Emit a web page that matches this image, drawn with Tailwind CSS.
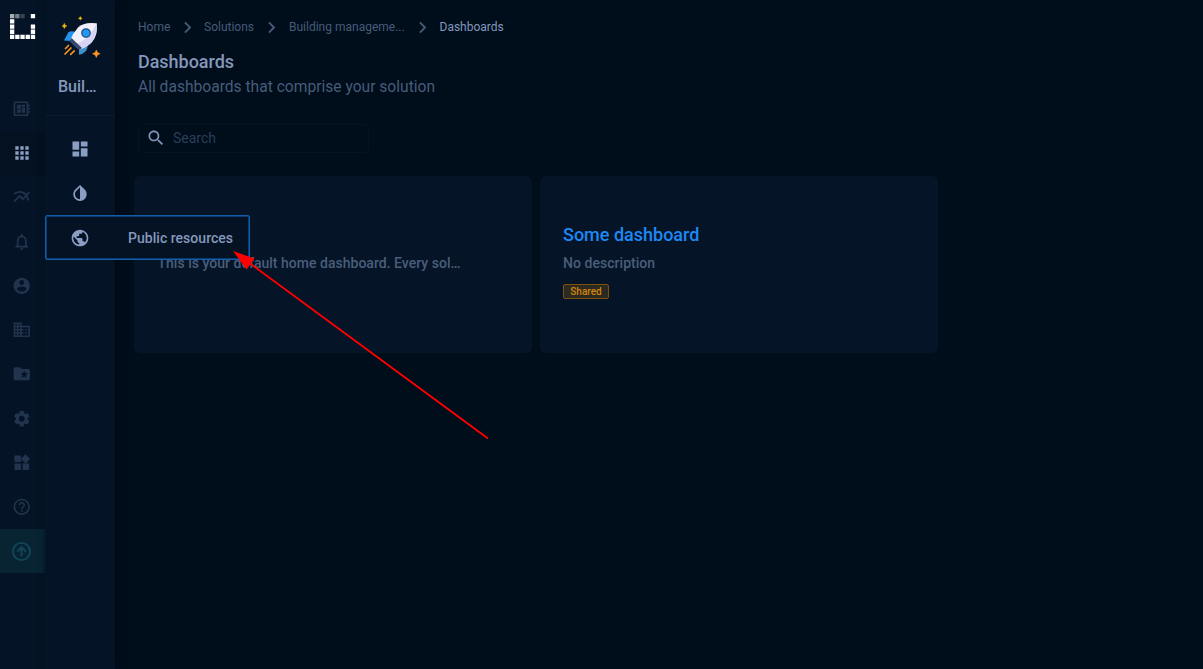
<!DOCTYPE html>
<html lang="en">
<head>
<meta charset="utf-8">
<title>Dashboards</title>
<script src="https://cdn.jsdelivr.net/npm/@tailwindcss/browser@4"></script>
</head>
<body class="relative flex h-[669px] w-[1203px] overflow-hidden bg-[#000d1b] font-['Roboto',sans-serif] text-[#8498bb]">

<!-- Main rail -->
<nav class="flex w-[45px] shrink-0 flex-col bg-[#041426] text-[#22344d]">
  <div class="h-[86.5px] pt-[14px] pl-[9.7px]">
    <svg width="26" height="26" viewBox="0 0 26 26" fill="#fff">
      <path d="M0 0h4.3v4.3H0z" opacity=".65"/><path d="M5.2 0h4.3v4.3H5.2z" opacity=".45"/><path d="M10.4 0h4.3v4.3h-4.3z" opacity=".2"/>
      <path d="M20.8 0h4.3v4.3h-4.3zM0 5.2h4.3v4.3H0zM0 10.4h4.3v4.3H0zM20.8 10.4h4.3v4.3h-4.3zM0 15.6h4.3v4.3H0zM20.8 15.6h4.3v4.3h-4.3zM0 20.8h4.3v4.3H0zM5.2 20.8h4.3v4.3H5.2zM10.4 20.8h4.3v4.3h-4.3zM15.6 20.8h4.3v4.3h-4.3zM20.8 20.8h4.3v4.3h-4.3z"/>
    </svg>
  </div>
  <div class="flex h-[44.25px] items-center pl-[12.2px]"><svg width="19.5" height="19.5" viewBox="0 0 24 24" fill="currentColor"><path d="M22 9V7h-2V5c0-1.100-.9-2-2-2H4c-1.100 0-2 .9-2 2v14c0 1.100.9 2 2 2h14c1.100 0 2-.9 2-2v-2h2v-2h-2v-2h2v-2h-2V9h2zm-4 10H4V5h14v14zM6 13h5v4H6zm6-6h4v3h-4zM6 7h5v5H6zm6 4h4v6h-4z"/></svg></div>
  <div class="flex h-[44.25px] items-center bg-[#041121] pl-[12.2px] text-[#8a9ec4]"><svg width="20" height="20" viewBox="0 0 24 24" fill="currentColor"><path d="M4 8h4V4H4v4zm6 12h4v-4h-4v4zm-6 0h4v-4H4v4zm0-6h4v-4H4v4zm6 0h4v-4h-4v4zm6-10v4h4V4h-4zm-6 4h4V4h-4v4zm6 6h4v-4h-4v4zm0 6h4v-4h-4v4z"/></svg></div>
  <div class="flex h-[44.25px] items-center pl-[12.2px]"><svg width="19.5" height="19.5" viewBox="0 0 24 24" fill="currentColor"><path d="M22 6.920l-1.410-1.410-2.850 3.210C15.680 6.400 12.830 5 9.610 5 6.720 5 4.070 6.160 2 8l1.420 1.420C5.120 7.930 7.270 7 9.610 7c2.740 0 5.090 1.260 6.770 3.240l-2.880 3.240-4-4L2 16.990l1.500 1.500 6-6.010 4 4 4.050-4.550c.75 1.350 1.250 2.900 1.440 4.550H21c-.22-2.300-.95-4.390-2.040-6.140L22 6.920z"/></svg></div>
  <div class="flex h-[44.25px] items-center pl-[12.2px]"><svg width="19.5" height="19.5" viewBox="0 0 24 24" fill="currentColor"><path d="M12 22c1.100 0 2-.9 2-2h-4c0 1.100.9 2 2 2zm6-6v-5c0-3.070-1.630-5.640-4.500-6.320V4c0-.83-.67-1.500-1.500-1.500s-1.500.67-1.500 1.500v.68C7.640 5.360 6 7.920 6 11v5l-2 2v1h16v-1l-2-2zm-2 1H8v-6c0-2.480 1.510-4.500 4-4.500s4 2.020 4 4.500v6z"/></svg></div>
  <div class="flex h-[44.25px] items-center pl-[12.2px]"><svg width="19.5" height="19.5" viewBox="0 0 24 24" fill="currentColor"><path d="M12 2C6.480 2 2 6.480 2 12s4.480 10 10 10 10-4.480 10-10S17.520 2 12 2zm0 3c1.660 0 3 1.340 3 3s-1.340 3-3 3-3-1.340-3-3 1.340-3 3-3zm0 14.200c-2.500 0-4.710-1.280-6-3.220.03-1.990 4-3.080 6-3.080 1.990 0 5.970 1.090 6 3.080-1.290 1.940-3.500 3.220-6 3.220z"/></svg></div>
  <div class="flex h-[44.25px] items-center pl-[12.2px]"><svg width="19.5" height="19.5" viewBox="0 0 24 24" fill="currentColor"><path d="M12 7V3H2v18h20V7H12zM6 19H4v-2h2v2zm0-4H4v-2h2v2zm0-4H4V9h2v2zm0-4H4V5h2v2zm4 12H8v-2h2v2zm0-4H8v-2h2v2zm0-4H8V9h2v2zm0-4H8V5h2v2zm10 12h-8v-2h2v-2h-2v-2h2v-2h-2V9h8v10zm-2-8h-2v2h2v-2zm0 4h-2v2h2v-2z"/></svg></div>
  <div class="flex h-[44.25px] items-center pl-[12.2px]"><svg width="19.5" height="19.5" viewBox="0 0 24 24" fill="currentColor"><path d="M20 6h-8l-2-2H4c-1.100 0-1.990.9-1.990 2L2 18c0 1.100.9 2 2 2h16c1.100 0 2-.9 2-2V8c0-1.100-.9-2-2-2zm-2.060 11L15 15.280 12.060 17l.78-3.330-2.590-2.240 3.410-.29L15 8l1.340 3.140 3.410.29-2.590 2.240.78 3.330z"/></svg></div>
  <div class="flex h-[44.25px] items-center pl-[12.2px]"><svg width="19.5" height="19.5" viewBox="0 0 24 24" fill="currentColor"><path d="M19.140 12.940c.04-.3.06-.61.06-.94 0-.32-.02-.64-.07-.94l2.030-1.580c.18-.14.23-.41.12-.61l-1.920-3.320c-.12-.22-.37-.29-.59-.22l-2.390.96c-.5-.38-1.030-.7-1.620-.94l-.36-2.540c-.04-.24-.24-.41-.48-.41h-3.840c-.24 0-.43.17-.47.41l-.36 2.540c-.59.24-1.130.57-1.620.94l-2.390-.96c-.22-.08-.47 0-.59.22L2.740 8.870c-.12.21-.08.47.12.61l2.030 1.580c-.05.3-.09.63-.09.94s.02.64.07.94l-2.030 1.580c-.18.14-.23.41-.12.61l1.920 3.320c.12.22.37.29.59.22l2.390-.96c.5.38 1.030.7 1.620.94l.36 2.540c.05.24.24.41.48.41h3.840c.24 0 .44-.17.47-.41l.36-2.540c.59-.24 1.130-.56 1.620-.94l2.390.96c.22.08.47 0 .59-.22l1.920-3.320c.12-.22.07-.47-.12-.61l-2.010-1.580zM12 15.600c-1.980 0-3.600-1.620-3.600-3.600s1.620-3.600 3.600-3.600 3.600 1.620 3.600 3.600-1.620 3.600-3.600 3.600z"/></svg></div>
  <div class="flex h-[44.25px] items-center pl-[12.2px]"><svg width="19.5" height="19.5" viewBox="0 0 24 24" fill="currentColor"><path d="M13 13v8h8v-8h-8zM3 21h8v-8H3v8zM3 3v8h8V3H3zm13.660-1.310L11 7.340 16.660 13l5.660-5.660-5.660-5.650z"/></svg></div>
  <div class="flex h-[44.25px] items-center pl-[12.2px]"><svg width="19.5" height="19.5" viewBox="0 0 24 24" fill="currentColor"><path d="M11 18h2v-2h-2v2zm1-16C6.480 2 2 6.480 2 12s4.480 10 10 10 10-4.480 10-10S17.520 2 12 2zm0 18c-4.410 0-8-3.590-8-8s3.590-8 8-8 8 3.590 8 8-3.590 8-8 8zm0-14c-2.210 0-4 1.790-4 4h2c0-1.100.9-2 2-2s2 .9 2 2c0 2-3 1.750-3 5h2c0-2.250 3-2.500 3-5 0-2.210-1.790-4-4-4z"/></svg></div>
  <div class="flex h-[44.25px] items-center bg-[#082433] pl-[10px] text-[#124657]"><svg width="23" height="23" viewBox="0 0 24 24" fill="none" stroke="currentColor" stroke-width="2"><circle cx="12" cy="12" r="9"/><path d="M12 17V8M7.500 12 12 7.500l4.500 4.500"/></svg></div>
</nav>

<!-- Solution rail -->
<aside class="flex w-[70px] shrink-0 flex-col bg-[#041426] shadow-[3px_0_8px_#000a17]">
  <div class="flex h-[115.500px] flex-col border-b border-l border-b-[#0b1c2f] border-l-[#031121] pl-[12px]">
    <svg class="mt-[15px] ml-[4px] shrink-0" width="40" height="44" viewBox="0 0 40 44">
      <path d="M6.500 17Q10 15.500 13.500 17L9 26 2 25.500z" fill="#2491ec"/>
      <path d="M17 33l8.500-5q.5 5-1.500 8-3.500 3.500-7 3.800z" fill="#3d91cc"/>
      <path d="M34.700 8.300Q22 6.500 16 12.500 11 18 8 25.500L17.500 34.500Q26 31.500 30 27 36 20 34.700 8.300z" fill="#f0effb"/>
      <path d="M34.700 8.300Q36 20 30 27 26 31.500 17.500 34.500L13 30Q28 24 34.700 8.300z" fill="#d5d4f3"/>
      <path d="M9.500 23L20 33l-2.500 1.800q-2 0-10-8.800z" fill="#334b70"/>
      <circle cx="24" cy="18" r="4.200" fill="#2196f3" stroke="#214f80" stroke-width="1.300"/>
      <path d="M6.500 30.500 3.500 33.500M9 33 3 39M12.200 35.800l-3.500 3.500" stroke="#f7931e" stroke-width="1.700" stroke-linecap="round"/>
      <path d="M2.300 8.300l.8 1.900 1.900.8-1.900.8-.8 1.900-.8-1.900-1.500-.8 1.500-.8zM18.300 1.400l.6 1.300 1.300.6-1.300.6-.6 1.300-.6-1.300-1.300-.6 1.300-.6z" fill="#ffc107" stroke="#ffc107" stroke-width=".4"/>
      <path d="M34.300 34.900l1.200 2.600 2.600 1.200-2.600 1.200-1.200 2.600-1.200-2.600-2.600-1.200 2.600-1.200z" fill="#ff9520" stroke="#ff9520" stroke-width=".5"/>
    </svg>
    <div class="mt-[16px] text-[16px] leading-[24px] font-medium">Buil…</div>
  </div>
  <div class="mt-[11.500px] flex h-[44.25px] items-center justify-center text-[#8a9ec4]"><svg width="20" height="20" viewBox="0 0 24 24" fill="currentColor"><path d="M3 13h8V3H3v10zm0 8h8v-6H3v6zm10 0h8V11h-8v10zm0-18v6h8V3h-8z"/></svg></div>
  <div class="flex h-[44.25px] items-center justify-center text-[#8a9ec4]"><svg width="20" height="20" viewBox="0 0 24 24" fill="currentColor"><path d="M17.660 7.930L12 2.270 6.340 7.930c-3.120 3.120-3.120 8.190 0 11.310C7.900 20.800 9.950 21.580 12 21.580s4.100-.78 5.660-2.340c3.120-3.120 3.120-8.190 0-11.310zM12 19.590c-1.600 0-3.110-.62-4.240-1.760C6.620 16.690 6 15.190 6 13.590s.62-3.110 1.760-4.240L12 5.100v14.490z"/></svg></div>
</aside>

<!-- Expanded menu entry laid over the cards -->
<div class="absolute top-[215px] left-[45px] z-10 flex h-[45px] w-[205px] items-center rounded-[2px] border border-[#145ba8] bg-[#041224] shadow-[inset_0_0_0_1px_#0a3c74]">
  <svg class="ml-[24px] text-[#8a9ec4]" width="20" height="20" viewBox="0 0 24 24" fill="currentColor"><path d="M12 2C6.480 2 2 6.480 2 12s4.480 10 10 10 10-4.480 10-10S17.520 2 12 2zm-1 17.930c-3.950-.49-7-3.850-7-7.930 0-.62.080-1.210.21-1.790L9 15v1c0 1.100.9 2 2 2v1.930zm6.900-2.540c-.26-.81-1-1.390-1.900-1.390h-1v-3c0-.55-.45-1-1-1H8v-2h2c.55 0 1-.45 1-1V7h2c1.100 0 2-.9 2-2v-.41c2.930 1.190 5 4.060 5 7.410 0 2.080-.8 3.970-2.100 5.390z"/></svg>
  <span class="mt-px ml-[38px] text-[14px] leading-[20px] font-medium tracking-[0.03px] whitespace-nowrap">Public resources</span>
</div>

<main class="flex flex-1 flex-col pl-[19px]">
  <div class="mt-[17px] flex h-[20px] items-center pl-[4px] text-[12px] whitespace-nowrap text-[#475c79]">
    <span class="w-[32px]">Home</span>
    <svg class="mx-[5.500px]" width="23" height="23" viewBox="0 0 24 24" fill="currentColor"><path d="M10 6L8.590 7.410 13.170 12l-4.580 4.590L10 18l6-6z"/></svg>
    <span class="w-[50px]">Solutions</span>
    <svg class="mx-[6px]" width="23" height="23" viewBox="0 0 24 24" fill="currentColor"><path d="M10 6L8.590 7.410 13.170 12l-4.580 4.590L10 18l6-6z"/></svg>
    <span class="w-[116px]">Building manageme...</span>
    <svg class="mx-[5.750px]" width="23" height="23" viewBox="0 0 24 24" fill="currentColor"><path d="M10 6L8.590 7.410 13.170 12l-4.580 4.590L10 18l6-6z"/></svg>
    <span class="text-[#8498bb]">Dashboards</span>
  </div>
  <h1 class="mt-[13.400px] pl-[4px] text-[18px] leading-[24px] font-medium tracking-[-0.04px]">Dashboards</h1>
  <p class="mt-[1px] pl-[4px] text-[15.600px] leading-[24px] text-[#475c79]">All dashboards that comprise your solution</p>
  <div class="mt-[24.600px] ml-[4px] flex h-[29px] w-[231px] items-center rounded-[4px] border border-[#041222] pl-[7px]">
    <svg width="20" height="20" viewBox="0 0 24 24" fill="#8095b8"><path d="M15.500 14h-.79l-.28-.27C15.410 12.590 16 11.110 16 9.500 16 5.910 13.090 3 9.500 3S3 5.910 3 9.500 5.910 16 9.500 16c1.610 0 3.090-.59 4.230-1.570l.27.28v.79l5 4.990L20.490 19l-4.990-5zm-6 0C7.010 14 5 11.990 5 9.500S7.010 5 9.500 5 14 7.010 14 9.500 11.990 14 9.500 14z"/></svg>
    <span class="ml-[7px] text-[14px] text-[#2a3f5a]">Search</span>
  </div>
  <section class="mt-[23px] flex gap-[8px]">
    <article class="h-[177px] w-[398px] rounded-[6px] bg-[#051426] px-[23.500px] pt-[76.600px]">
      <p class="text-[14px] leading-[20px] font-medium tracking-[0.02px] whitespace-nowrap text-[#4a5e7b]">This is your default home dashboard. Every sol…</p>
    </article>
    <article class="flex h-[177px] w-[398px] flex-col items-start rounded-[6px] bg-[#051426] px-[23px] pt-[46.600px]">
      <h2 class="text-[18px] leading-[24px] font-medium text-[#1e88f5]">Some dashboard</h2>
      <p class="mt-[6px] text-[14px] leading-[20px] font-medium tracking-[0.04px] text-[#4a5e7b]">No description</p>
      <span class="mt-[11.400px] flex h-[15px] w-[46px] items-center justify-center rounded-[2px] border border-[#7a520e] bg-[#2c2920] pt-px text-[10px] leading-none font-medium text-[#d3860b]">Shared</span>
    </article>
  </section>
</main>

<!-- Annotation arrow -->
<svg class="pointer-events-none absolute inset-0 z-20" width="1203" height="669" viewBox="0 0 1203 669">
  <path d="M250 263.500 488 438.500" stroke="#f00" stroke-width="1.900"/>
  <path d="M233 251 254.500 258.500 246.500 269.500z" fill="#f00"/>
</svg>
</body>
</html>
